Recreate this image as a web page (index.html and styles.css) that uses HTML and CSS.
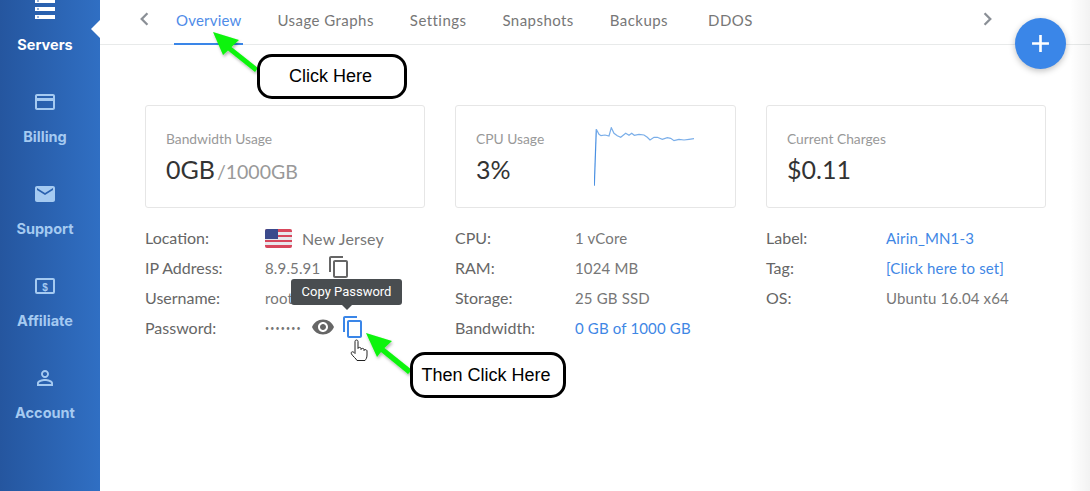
FILE: index.html
```html
<!DOCTYPE html>
<html lang="en">
<head>
    <meta charset="UTF-8">
    <meta name="viewport" content="width=device-width, initial-scale=1.0">
    <title>Server Overview</title>
    <link rel="stylesheet" href="styles.css">
</head>
<body>
    <aside class="sidebar">
        <a class="side-item active">
            <svg class="side-icon" viewBox="0 0 24 24"><path d="M2 1h20v4H2zM2 9h20v4H2zM2 17h20v4H2z" fill="#fff"/><path d="M4 2.500h2v1H4zM4 10.500h2v1H4zM4 18.500h2v1H4z" fill="#2f68b8"/></svg>
            <span>Servers</span>
        </a>
        <a class="side-item">
            <svg class="side-icon" viewBox="0 0 24 24"><path d="M20 4H4c-1.110 0-1.990.89-1.990 2L2 18c0 1.110.89 2 2 2h16c1.110 0 2-.89 2-2V6c0-1.110-.89-2-2-2zm0 14H4v-7h16v7zm0-10H4V6h16v2z" fill="currentColor"/></svg>
            <span>Billing</span>
        </a>
        <a class="side-item">
            <svg class="side-icon" viewBox="0 0 24 24"><path d="M20 4H4c-1.100 0-1.990.9-1.990 2L2 18c0 1.100.9 2 2 2h16c1.100 0 2-.9 2-2V6c0-1.100-.9-2-2-2zm0 4l-8 5-8-5V6l8 5 8-5v2z" fill="currentColor"/></svg>
            <span>Support</span>
        </a>
        <a class="side-item">
            <svg class="side-icon" viewBox="0 0 24 24"><rect x="3" y="5" width="18" height="14" rx="1" fill="none" stroke="currentColor" stroke-width="2"/><text x="12" y="16.500" text-anchor="middle" class="dollar">$</text></svg>
            <span>Affiliate</span>
        </a>
        <a class="side-item">
            <svg class="side-icon" viewBox="0 0 24 24"><path d="M12 5.900c1.160 0 2.100.94 2.100 2.100s-.94 2.100-2.100 2.100S9.900 9.160 9.900 8s.94-2.100 2.100-2.100m0 9c2.970 0 6.100 1.460 6.100 2.100v1.100H5.900V17c0-.64 3.130-2.100 6.100-2.100M12 4C9.790 4 8 5.790 8 8s1.790 4 4 4 4-1.790 4-4-1.790-4-4-4zm0 9c-2.670 0-8 1.340-8 4v3h16v-3c0-2.660-5.330-4-8-4z" fill="currentColor"/></svg>
            <span>Account</span>
        </a>
    </aside>
    <div class="notch"></div>

    <main class="main">
        <nav class="tabs">
            <svg class="chevron prev" viewBox="0 0 10 14"><path d="M8 2L3 7l5 5" fill="none" stroke="currentColor" stroke-width="2"/></svg>
            <a class="tab current">Overview</a>
            <a class="tab">Usage Graphs</a>
            <a class="tab">Settings</a>
            <a class="tab">Snapshots</a>
            <a class="tab">Backups</a>
            <a class="tab last">DDOS</a>
            <svg class="chevron next" viewBox="0 0 10 14"><path d="M2 2l5 5-5 5" fill="none" stroke="currentColor" stroke-width="2"/></svg>
        </nav>

        <section class="cards">
            <div class="card">
                <div>
                    <div class="card-label">Bandwidth Usage</div>
                    <div class="card-value">0GB<small>/1000GB</small></div>
                </div>
            </div>
            <div class="card">
                <div>
                    <div class="card-label">CPU Usage</div>
                    <div class="card-value">3%</div>
                </div>
                <svg class="spark" viewBox="0 0 100 60">
                    <path d="M.3 58.700L2.300 2.300" fill="none" stroke="#4a90e2" stroke-width="1.200"/>
                    <path d="M2.300 2.300L5 7.300 7 8.700 11 8 15 9 17.300 .7 20 6.300 23.300 8.700 26.700 10.300 31.700 6.300 35 8.300 37.700 6.300 40.300 8.300 45 7.300 50 8 53.300 10.300 56 13 60 10.300 63.300 10.300 68.300 12.300 73.300 10.700 76.700 11.300 80 13.700 85 12.300 90 13 95 12.300 100 11.700" fill="none" stroke="#7aaee9" stroke-width="1.200"/>
                </svg>
            </div>
            <div class="card">
                <div>
                    <div class="card-label">Current Charges</div>
                    <div class="card-value">$0.11</div>
                </div>
            </div>
        </section>

        <section class="details">
            <dl class="info">
                <dt>Location:</dt>
                <dd>
                    <svg class="flag" viewBox="0 0 27 19">
                        <rect width="27" height="19" rx="2" fill="#e8e8ec"/>
                        <path d="M0 2a2 2 0 012-2h23a2 2 0 012 2v1H0zM0 6h27v2H0zM0 11h27v2H0zM0 16h27v1a2 2 0 01-2 2H2a2 2 0 01-2-2z" fill="#d8475c"/>
                        <path d="M0 2a2 2 0 012-2h11v10H0z" fill="#3b4a8c"/>
                    </svg>
                    <span class="place">New Jersey</span>
                </dd>
                <dt>IP Address:</dt>
                <dd>8.9.5.91
                    <svg class="icon copy" viewBox="0 0 24 24"><path d="M16 1H4c-1.100 0-2 .9-2 2v14h2V3h12V1zm3 4H8c-1.100 0-2 .9-2 2v14c0 1.100.9 2 2 2h11c1.100 0 2-.9 2-2V7c0-1.100-.9-2-2-2zm0 16H8V7h11v14z" fill="currentColor"/></svg>
                </dd>
                <dt>Username:</dt>
                <dd>root</dd>
                <dt>Password:</dt>
                <dd>
                    <span class="dots">•••••••</span>
                    <svg class="icon eye" viewBox="0 0 24 24"><path d="M12 4.500C7 4.500 2.730 7.610 1 12c1.730 4.390 6 7.500 11 7.500s9.270-3.110 11-7.500c-1.730-4.390-6-7.500-11-7.500zM12 17c-2.760 0-5-2.240-5-5s2.240-5 5-5 5 2.240 5 5-2.240 5-5 5zm0-8c-1.660 0-3 1.340-3 3s1.340 3 3 3 3-1.340 3-3-1.340-3-3-3z" fill="currentColor"/></svg>
                    <svg class="icon copy blue" viewBox="0 0 24 24"><path d="M16 1H4c-1.100 0-2 .9-2 2v14h2V3h12V1zm3 4H8c-1.100 0-2 .9-2 2v14c0 1.100.9 2 2 2h11c1.100 0 2-.9 2-2V7c0-1.100-.9-2-2-2zm0 16H8V7h11v14z" fill="currentColor"/></svg>
                </dd>
            </dl>
            <dl class="info">
                <dt>CPU:</dt>
                <dd>1 vCore</dd>
                <dt>RAM:</dt>
                <dd>1024 MB</dd>
                <dt>Storage:</dt>
                <dd>25 GB SSD</dd>
                <dt>Bandwidth:</dt>
                <dd><a class="link">0 GB of 1000 GB</a></dd>
            </dl>
            <dl class="info">
                <dt>Label:</dt>
                <dd><a class="link">Airin_MN1-3</a></dd>
                <dt>Tag:</dt>
                <dd><a class="link">[Click here to set]</a></dd>
                <dt>OS:</dt>
                <dd>Ubuntu 16.04 x64</dd>
            </dl>
        </section>
    </main>

    <div class="edge-shade"></div>

    <button class="fab">
        <svg viewBox="0 0 18 18"><path d="M9 1v16M1 9h16" stroke="#fff" stroke-width="2.500"/></svg>
    </button>

    <div class="tooltip">Copy Password</div>

    <!-- annotations drawn on top of the screenshot -->
    <svg class="overlay" viewBox="0 0 1090 491">
        <defs>
            <filter id="soft" x="-20%" y="-20%" width="140%" height="140%">
                <feDropShadow dx="1" dy="2" stdDeviation="1.500" flood-color="#000" flood-opacity=".3"/>
            </filter>
        </defs>
        <path class="arrow" d="M213 32L239 40 231.500 47 258 68 255 72 228 50.500 223 55z"/>
        <path class="arrow" d="M366 333L392 341 384.500 348 412 370 408 374 381 352 377 357z"/>
        <path class="hand" d="M355 341.500c0-2 3-2 3 0v7c0-1.500 3-1.500 3 0v1c0-1.500 3-1.500 3 0v1c0-1.500 3-1 3 .5v4c0 3-1 4-2 5.500h-8c-1-2-4-4-5.500-6.500-1-2 1-3 2.500-1.500l1 1z"/>
    </svg>
    <div class="callout click-one">Click Here</div>
    <div class="callout click-two">Then Click Here</div>
</body>
</html>
```

FILE: styles.css
```css
* {
    box-sizing: border-box;
}
html, body {
    height: 100%;
}
body {
    margin: 0;
    display: flex;
    overflow: hidden;
    background: #fff;
    color: #666;
    font-family: 'Lato', 'Open Sans', sans-serif;
}

.sidebar {
    width: 100px;
    flex: none;
    height: 100%;
    overflow: hidden;
    padding: 1px 10px 0 0;
    background: linear-gradient(90deg, #25569f, #306fc3);
}
.side-item {
    display: flex;
    flex-direction: column;
    align-items: center;
    height: 92px;
    padding-top: 14px;
    position: relative;
    top: -17px;
    color: #a5caf1;
    font-family: 'Inter', sans-serif;
    font-weight: 700;
    font-size: 14.500px;
}
.side-item.active {
    color: #fff;
}
.side-item span {
    margin-top: 14px;
    line-height: 17px;
}
.side-icon {
    width: 24px;
    height: 24px;
}
.dollar {
    font-family: 'Liberation Sans', sans-serif;
    font-weight: 700;
    font-size: 10px;
    fill: currentColor;
}
.notch {
    position: absolute;
    left: 91px;
    top: 20px;
    border: 9px solid transparent;
    border-left: 0;
    border-right-color: #fff;
}

.main {
    flex: 1;
    min-width: 0;
}
.tabs {
    display: flex;
    align-items: center;
    gap: 32px;
    height: 45px;
    padding: 0 98px 0 38px;
    border-bottom: 1px solid #e8eaea;
    color: #777;
}
.chevron {
    width: 12px;
    height: 16px;
    margin: 0 -2px 6px 0;
    color: #8a8f96;
}
.chevron.prev {
    margin-right: -8px;
}
.chevron.next {
    margin-left: auto;
}
.tab {
    height: 45px;
    padding: 11px 2px 0;
    font-size: 15px;
    line-height: 18px;
    letter-spacing: .45px;
}
.tab.current {
    color: #4f8ce8;
    letter-spacing: .2px;
    border-bottom: 2px solid #3a86e8;
}
.tab.last {
    margin-left: 4px;
}

.cards {
    display: grid;
    grid-template-columns: 280px 281px 280px;
    gap: 30px;
    margin: 60px 0 0 45px;
}
.card {
    display: flex;
    height: 103px;
    padding: 24px 20px 0;
    border: 1px solid #e6e6e6;
    border-radius: 3px;
    white-space: nowrap;
}
.card-label {
    font-size: 13.800px;
    line-height: 18px;
    color: #999;
}
.card-value {
    margin-top: 5px;
    font-size: 25px;
    line-height: 32px;
    color: #333;
}
.card-value small {
    margin-left: 2px;
    font-size: 19.500px;
    color: #999;
}
.spark {
    width: 100px;
    height: 60px;
    margin: -3px 21px 0 auto;
}

.details {
    display: grid;
    grid-template-columns: 280px 281px 280px;
    gap: 30px;
    margin: 15px 0 0 45px;
}
.info {
    display: grid;
    grid-template-columns: 120px 1fr;
    grid-auto-rows: 30px;
    align-items: center;
    margin: 0;
    font-size: 16px;
}
.info dd {
    display: flex;
    align-items: center;
    margin: 0;
    font-size: 15px;
    letter-spacing: .15px;
    color: #777;
}
.info dt {
    padding-bottom: 2px;
    color: #666;
}
.link {
    color: #3f87e5;
}
.flag {
    width: 27px;
    height: 19px;
    margin-right: 10px;
}
.place {
    font-size: 16px;
}
.icon {
    flex: none;
    width: 24px;
    height: 24px;
    margin-bottom: 2px;
}
.copy {
    margin-left: 7px;
    color: #666;
}
.copy.blue {
    margin-left: 6px;
    color: #3a86e8;
}
.eye {
    margin-left: 9px;
    color: #666;
}
.dots {
    font-size: 7px;
    letter-spacing: 1.200px;
}

.edge-shade {
    position: absolute;
    right: 0;
    top: 0;
    width: 20px;
    height: 100%;
    background: linear-gradient(90deg, rgba(0, 0, 0, 0), rgba(0, 0, 0, .05));
}
.fab {
    position: absolute;
    left: 1015px;
    top: 18px;
    width: 51px;
    height: 51px;
    padding: 16px;
    border: 0;
    border-radius: 50%;
    background: #3a86e8;
    box-shadow: 0 2px 6px rgba(0, 0, 0, .25);
}
.tooltip {
    position: absolute;
    left: 291px;
    top: 279px;
    width: 111px;
    height: 26px;
    border-radius: 3px;
    background: #494d50;
    color: #fff;
    font-family: 'Roboto', sans-serif;
    font-size: 13px;
    line-height: 26px;
    text-align: center;
}
.tooltip::after {
    content: "";
    position: absolute;
    left: 51px;
    top: 26px;
    border: 5px solid transparent;
    border-bottom: 0;
    border-top-color: #494d50;
}
.overlay {
    position: absolute;
    left: 0;
    top: 0;
    width: 1090px;
    height: 491px;
    pointer-events: none;
}
.arrow {
    fill: #0bf40b;
    filter: url(#soft);
}
.hand {
    fill: #fff;
    stroke: #222;
    stroke-width: 1;
}
.callout {
    position: absolute;
    border: 3px solid #000;
    border-radius: 15px;
    background: #fff;
    color: #000;
    font-family: 'Liberation Sans', sans-serif;
    font-size: 18px;
    text-align: center;
}
.click-one {
    left: 257px;
    top: 54px;
    width: 150px;
    height: 45px;
    padding-right: 3px;
    line-height: 39px;
}
.click-two {
    left: 410px;
    top: 352px;
    width: 156px;
    height: 46px;
    padding-right: 4px;
    line-height: 40px;
}
```
